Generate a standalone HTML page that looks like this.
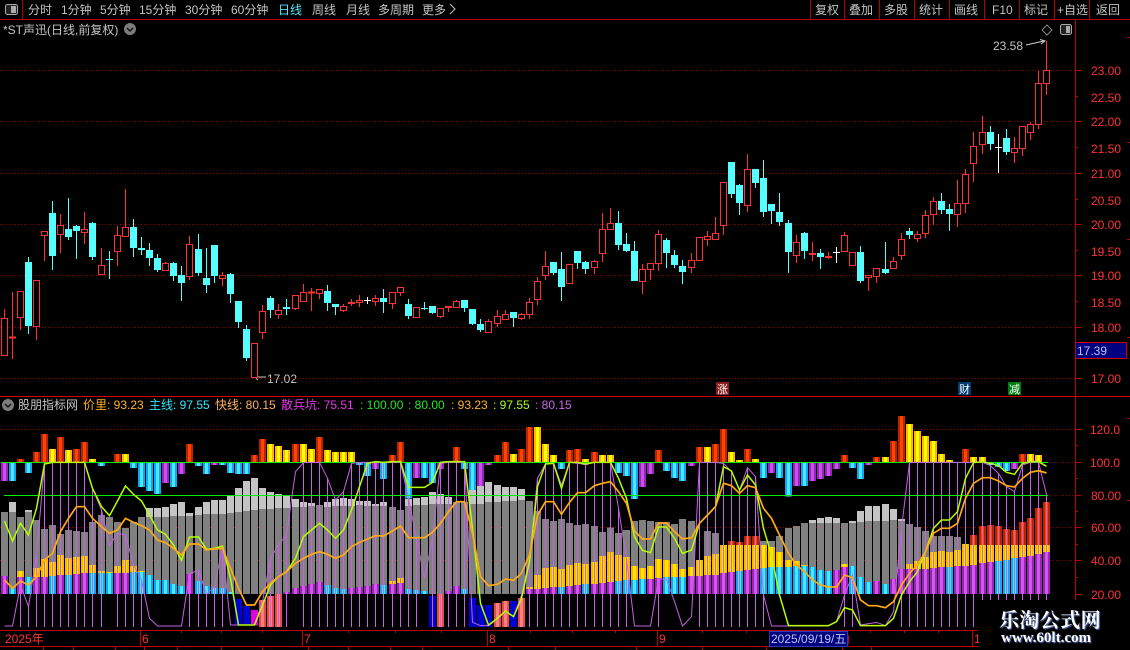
<!DOCTYPE html>
<html lang="zh-CN"><head><meta charset="utf-8"><title>*ST声迅</title>
<style>
html,body{margin:0;padding:0;background:#000;width:1130px;height:650px;overflow:hidden}
svg{position:absolute;left:0;top:0;display:block}
text{font-family:"Liberation Sans","Noto Sans CJK SC",sans-serif;font-size:12px;white-space:pre}
.m{fill:#c4c4c4}.r{fill:#ff3232}
.wm{position:absolute;left:979px;top:600px;width:151px;height:50px;background:#000}
.wm1{position:absolute;left:20px;top:7px;font:bold 20px/24px "Noto Serif CJK SC","Liberation Serif",serif;color:#fff;letter-spacing:.4px;white-space:nowrap;text-shadow:1px 1px 1px #5a78c8}
.wm2{position:absolute;left:22px;top:29px;font:bold 15px/18px "Liberation Serif",serif;color:#fff;white-space:nowrap;text-shadow:1px 1px 1px #5a78c8}
</style></head><body>
<svg width="1130" height="650" viewBox="0 0 1130 650" xmlns="http://www.w3.org/2000/svg" shape-rendering="crispEdges">
<rect width="1130" height="650" fill="#000"/>
<!-- top bar -->
<path d="M0 19.5H1130M22.5 0V19M810.5 0V19M844.5 0V19M879.5 0V19M914.5 0V19M949.5 0V19M984.5 0V19M1019.5 0V19M1054.5 0V19M1089.5 0V19" stroke="#b40000" fill="none"/>
<rect x="5.5" y="4.5" width="12" height="10" rx="2" fill="#222" stroke="#aaa" shape-rendering="auto"/><rect x="11" y="6" width="5" height="7" fill="#aaa"/>
<g class="m">
<text x="28" y="14">分时</text><text x="61" y="14">1分钟</text><text x="100" y="14">5分钟</text><text x="139" y="14">15分钟</text><text x="185" y="14">30分钟</text><text x="231" y="14">60分钟</text>
<text x="278" y="14" style="fill:#4fe8ff">日线</text><text x="312" y="14">周线</text><text x="346" y="14">月线</text><text x="378" y="14">多周期</text><text x="422" y="14">更多</text>
<text x="815" y="14">复权</text><text x="849" y="14">叠加</text><text x="884" y="14">多股</text><text x="919" y="14">统计</text><text x="954" y="14">画线</text><text x="992" y="14">F10</text><text x="1024" y="14">标记</text><text x="1057" y="14">+自选</text><text x="1096" y="14">返回</text>
<text x="3" y="34">*ST声迅(日线,前复权)</text>
<text x="993" y="50">23.58</text><text x="267" y="383">17.02</text>
</g>
<path d="M450 4l5 5-5 5" stroke="#c4c4c4" fill="none" shape-rendering="auto"/>
<circle cx="130" cy="29" r="6" fill="#7c7c7c" shape-rendering="auto"/><path d="M127 28l3 3 3-3" stroke="#111" stroke-width="1.4" fill="none" shape-rendering="auto"/>
<path d="M1047 25l5 5-5 5-5-5z" stroke="#888" fill="none" shape-rendering="auto"/>
<rect x="1060.5" y="24.5" width="11" height="10" rx="2" fill="#222" stroke="#aaa" shape-rendering="auto"/><rect x="1066" y="26" width="4" height="7" fill="#aaa"/>
<path d="M1026 45l18-4M1040 39.5l5 1.5-4 3" stroke="#ccc" fill="none" shape-rendering="auto"/>
<path d="M266 377H254M258 374l-4 3 4 3" stroke="#ccc" fill="none" shape-rendering="auto"/>
<!-- upper grid -->
<path d="M0 70.5H1075M0 121.5H1075M0 173.5H1075M0 224.5H1075M0 275.5H1075M0 327.5H1075M0 378.5H1075" stroke="#8c0000" stroke-dasharray="1 2" fill="none"/>
<!-- axes -->
<path d="M1075.5 19V600" stroke="#c00000" stroke-width="1" fill="none"/>
<path d="M0 396.5H1130" stroke="#d00000" fill="none"/>
<path d="M1076 70.5h5M1076 96.5h2M1076 121.5h5M1076 147.5h2M1076 173.5h5M1076 199.5h2M1076 224.5h5M1076 250.5h2M1076 275.5h5M1076 301.5h2M1076 327.5h5M1076 378.5h5M1076 429.5h5M1076 445.5h2M1076 462.5h5M1076 478.5h2M1076 495.5h5M1076 511.5h2M1076 527.5h5M1076 544.5h2M1076 560.5h5M1076 577.5h2M1076 594.5h5M1127 37.5h3M1127 142.5h3M1127 239.5h3M1127 337.5h3M1127 418.5h3M1127 500.5h3" stroke="#c00000" fill="none"/>
<g class="r">
<text x="1091" y="75">23.00</text><text x="1091" y="102">22.50</text><text x="1091" y="126">22.00</text><text x="1091" y="153">21.50</text><text x="1091" y="178">21.00</text><text x="1091" y="205">20.50</text><text x="1091" y="229">20.00</text><text x="1091" y="256">19.50</text><text x="1091" y="280">19.00</text><text x="1091" y="307">18.50</text><text x="1091" y="332">18.00</text><text x="1091" y="383">17.00</text>
<text x="1090" y="434">120.0</text><text x="1090" y="467">100.0</text><text x="1091" y="500">80.00</text><text x="1091" y="532">60.00</text><text x="1091" y="565">40.00</text><text x="1091" y="599">20.00</text>
</g>
<rect x="1075.5" y="342.5" width="51" height="16" fill="#000080" stroke="#d00000"/>
<text x="1077" y="355" style="fill:#b8c4f0">17.39</text>
<!-- markers -->
<rect x="716" y="382" width="13" height="13" fill="#8a1c1c"/><text x="717" y="393" style="font-size:11px;fill:#fff">涨</text>
<rect x="958" y="382" width="13" height="13" fill="#003a70"/><text x="959" y="393" style="font-size:11px;fill:#fff">财</text>
<rect x="1008" y="382" width="13" height="13" fill="#007c10"/><text x="1009" y="393" style="font-size:11px;fill:#fff">减</text>
<!-- candles cyan wicks -->
<path stroke="#55ffff" fill="none" d="M28.5 257V334M52.5 201V270M68.5 198V240M76.5 225V259M92.5 222V260M109.5 251V279M133.5 219V257M141.5 237V255M149.5 243V266M157.5 254V272M173.5 262V281M181.5 266V301M198.5 234V276M206.5 248V293M214.5 245V283M230.5 273V303M238.5 301V328M246.5 325V361M270.5 296V318M286.5 299V315M327.5 285V311M335.5 304V315M383.5 289V313M408.5 299V319M424.5 302V310M432.5 306V314M464.5 300V312M472.5 309V325M480.5 319V332M513.5 312V327M553.5 262V275M561.5 252V301M577.5 251V269M585.5 261V274M618.5 211V250M626.5 233V252M634.5 241V281M666.5 238V268M674.5 250V268M682.5 260V284M731.5 162V198M739.5 184V215M755.5 169V188M763.5 160V217M771.5 204V224M779.5 193V226M788.5 220V273M804.5 232V259M820.5 249V269M860.5 246V283M885.5 242V274M909.5 228V239M941.5 193V214M949.5 204V231M990.5 126V150M1006.5 129V155"/>
<path stroke="#55ffff" stroke-width="7" fill="none" d="M28.5 262V326M52.5 213V256M68.5 229V237M76.5 226V231M92.5 223V257M109.5 259V260M133.5 227V248M141.5 248V250M149.5 250V258M157.5 258V270M173.5 263V276M181.5 275V283M198.5 249V273M206.5 278V285M214.5 245V276M230.5 274V294M238.5 301V322M246.5 329V358M270.5 298V310M286.5 307V309M327.5 291V303M335.5 304V307M383.5 298V302M408.5 304V316M424.5 308V309M432.5 306V313M464.5 300V308M472.5 309V324M480.5 324V330M513.5 312V318M553.5 262V273M561.5 269V287M577.5 251V263M585.5 262V269M618.5 223V245M626.5 244V251M634.5 251V281M666.5 240V253M674.5 255V265M682.5 266V272M731.5 162V194M739.5 185V203M755.5 169V183M763.5 178V212M771.5 204V211M779.5 212V222M788.5 223V252M804.5 233V251M820.5 253V257M860.5 252V281M885.5 269V273M909.5 231V235M941.5 201V210M949.5 209V214M990.5 132V144M1006.5 138V152"/>
<!-- red wicks -->
<path stroke="#ff3232" fill="none" d="M4.5 309V356M12.5 292V359M20.5 292V330M36.5 281V340M44.5 232V261M60.5 214V253M84.5 212V244M101.5 248V275M117.5 226V266M125.5 189V237M165.5 262V271M189.5 236V280M222.5 272V286M254.5 344V378M262.5 305V339M278.5 304V319M295.5 295V310M303.5 284V302M311.5 288V311M319.5 290V299M343.5 304V312M351.5 299V306M359.5 295V307M375.5 295V306M392.5 293V309M400.5 288V296M416.5 308V318M440.5 309V318M448.5 306V312M456.5 300V308M488.5 319V333M497.5 310V327M505.5 310V320M521.5 313V320M529.5 298V319M537.5 277V305M545.5 251V280M569.5 265V284M594.5 260V274M602.5 213V262M610.5 208V230M642.5 264V294M650.5 264V280M658.5 230V271M691.5 253V273M699.5 238V261M707.5 231V246M715.5 217V240M723.5 183V235M747.5 154V212M796.5 235V263M812.5 242V261M828.5 252V259M844.5 232V252M852.5 252V266M868.5 276V291M876.5 268V283M893.5 257V269M901.5 233V260M917.5 231V242M925.5 210V238M933.5 197V225M957.5 180V227M965.5 169V213M973.5 132V182M982.5 116V154M1014.5 137V163M1022.5 126V156M1030.5 122V140M1038.5 71V129M1046.5 41V95"/>
<path stroke="#ff3232" fill="#000" d="M1.5 318.5h6V355.5h-6zM17.5 291.5h6V317.5h-6zM33.5 280.5h6V326.5h-6zM41.5 231.5h6V235.5h-6zM57.5 225.5h6V234.5h-6zM81.5 229.5h6V232.5h-6zM98.5 265.5h6V274.5h-6zM114.5 235.5h6V251.5h-6zM122.5 227.5h6V236.5h-6zM162.5 263.5h6V270.5h-6zM186.5 244.5h6V276.5h-6zM219.5 275.5h6V278.5h-6zM251.5 343.5h6V377.5h-6zM259.5 311.5h6V332.5h-6zM275.5 310.5h6V314.5h-6zM292.5 295.5h6V308.5h-6zM300.5 292.5h6V301.5h-6zM316.5 289.5h6V293.5h-6zM340.5 306.5h6V310.5h-6zM356.5 300.5h6V302.5h-6zM372.5 298.5h6V301.5h-6zM389.5 292.5h6V303.5h-6zM397.5 287.5h6V292.5h-6zM413.5 307.5h6V317.5h-6zM437.5 308.5h6V316.5h-6zM453.5 301.5h6V307.5h-6zM485.5 321.5h6V332.5h-6zM494.5 316.5h6V323.5h-6zM502.5 314.5h6V319.5h-6zM518.5 314.5h6V318.5h-6zM526.5 302.5h6V314.5h-6zM534.5 281.5h6V299.5h-6zM542.5 266.5h6V275.5h-6zM566.5 264.5h6V283.5h-6zM591.5 261.5h6V267.5h-6zM599.5 229.5h6V253.5h-6zM607.5 223.5h6V229.5h-6zM639.5 269.5h6V281.5h-6zM647.5 263.5h6V269.5h-6zM655.5 234.5h6V263.5h-6zM688.5 260.5h6V267.5h-6zM696.5 237.5h6V260.5h-6zM704.5 236.5h6V239.5h-6zM712.5 233.5h6V239.5h-6zM720.5 182.5h6V225.5h-6zM744.5 169.5h6V205.5h-6zM793.5 242.5h6V255.5h-6zM841.5 235.5h6V251.5h-6zM849.5 252.5h6V265.5h-6zM865.5 275.5h6V277.5h-6zM873.5 268.5h6V276.5h-6zM890.5 261.5h6V268.5h-6zM898.5 239.5h6V255.5h-6zM914.5 234.5h6V238.5h-6zM922.5 215.5h6V233.5h-6zM930.5 201.5h6V214.5h-6zM954.5 203.5h6V214.5h-6zM962.5 174.5h6V203.5h-6zM970.5 146.5h6V163.5h-6zM979.5 132.5h6V144.5h-6zM1011.5 148.5h6V152.5h-6zM1019.5 126.5h6V148.5h-6zM1027.5 124.5h6V132.5h-6zM1035.5 83.5h6V124.5h-6zM1043.5 70.5h6V83.5h-6z"/>
<path stroke="#ff3232" fill="none" stroke-width="2" d="M9 337.5h7M308 292.5h7M348 303h7M445 307h7M809 254h7M825 257h7"/>
<path stroke="#fff" fill="none" d="M367.5 297V304M836.5 247V263M998.5 134V173M364 300.5h7M833 252.5h7M995 147.5h7"/>
<!-- lower header -->
<circle cx="8" cy="405" r="6" fill="#7c7c7c" shape-rendering="auto"/><path d="M5 404l3 3 3-3" stroke="#111" stroke-width="1.4" fill="none" shape-rendering="auto"/>
<text x="18" y="409" style="fill:#c4c4c4">股朋指标网</text>
<text x="83" y="409" style="fill:#ffb028">价里: 93.23</text>
<text x="149" y="409" style="fill:#30e8ff">主线: 97.55</text>
<text x="215" y="409" style="fill:#ffb060">快线: 80.15</text>
<text x="281" y="409" style="fill:#e838e8">散兵坑: 75.51</text>
<text x="360" y="409" style="fill:#22e822">: 100.00</text>
<text x="408" y="409" style="fill:#22e822">: 80.00</text>
<text x="451" y="409" style="fill:#ffb028">: 93.23</text>
<text x="493" y="409" style="fill:#a8ff20">: 97.55</text>
<text x="535" y="409" style="fill:#c868e8">: 80.15</text>
<!-- lower grid -->
<path d="M0 429.5H1075M1048 462.5H1075M1048 495.5H1075M0 527.5H1075M0 560.5H1075" stroke="#8c0000" stroke-dasharray="1 2" fill="none"/>
<!-- lower bars: x in px, y in 3x-coordinates -->
<defs>
<path id="upr" d="M20.5 202V192M36.5 202V171M44.5 202V117M60.5 202V126M76.5 202V162M84.5 202V141M117.5 202V177M189.5 202V147M254.5 202V180M262.5 202V132M295.5 202V147M319.5 202V126M392.5 202V180M400.5 202V141M456.5 202V156M497.5 202V180M505.5 202V141M521.5 202V162M529.5 202V96M569.5 202V165M577.5 202V162M594.5 202V171M658.5 202V165M699.5 202V156M715.5 202V147M723.5 202V102M747.5 202V162M844.5 202V180M876.5 202V186M893.5 202V138M901.5 202V63M965.5 202V162M1022.5 202V177"/>
<path id="upy" d="M52.5 202V162M68.5 202V165M92.5 202V192M125.5 202V177M270.5 202V147M278.5 202V153M286.5 202V165M303.5 202V147M311.5 202V162M327.5 202V165M335.5 202V171M343.5 202V171M351.5 202V171M513.5 202V177M537.5 202V96M545.5 202V147M553.5 202V180M585.5 202V192M602.5 202V180M610.5 202V180M707.5 202V156M731.5 202V171M739.5 202V195M755.5 202V192M885.5 202V186M909.5 202V87M917.5 202V108M925.5 202V123M933.5 202V138M941.5 202V177M949.5 202V195M973.5 202V186M982.5 202V186M1030.5 202V177M1038.5 202V180"/>
<path id="dnp" d="M4.5 202V258M165.5 202V264M181.5 202V237M214.5 202V210M375.5 202V222M416.5 202V249M440.5 202V222M488.5 202V210M480.5 202V273M585.5 202V210M642.5 202V276M650.5 202V237M691.5 202V213M771.5 202V234M796.5 202V273M812.5 202V258M820.5 202V252M828.5 202V243M836.5 202V222M868.5 202V210M1014.5 202V222"/>
<path id="dnc" d="M12.5 202V258M28.5 202V234M101.5 202V213M133.5 202V219M141.5 202V276M149.5 202V288M157.5 202V297M173.5 202V276M198.5 202V213M206.5 202V237M222.5 202V210M230.5 202V234M238.5 202V237M246.5 202V237M359.5 202V210M367.5 202V243M383.5 202V252M408.5 202V310M424.5 202V249M432.5 202V264M464.5 202V222M472.5 202V285M561.5 202V222M618.5 202V234M626.5 202V243M634.5 202V312M666.5 202V228M674.5 202V249M682.5 202V258M763.5 202V249M779.5 202V249M788.5 202V304M804.5 202V273M852.5 202V219M860.5 202V252M990.5 202V210M998.5 202V216M1006.5 202V228"/>
<path id="rd" d="M731.5 597V438M739.5 597V441M747.5 597V423M755.5 597V423M973.5 597V420M982.5 597V393M990.5 597V390M998.5 597V393M1006.5 597V402M1014.5 597V405M1022.5 597V381M1030.5 597V369M1038.5 597V339M1046.5 597V321"/>
<path id="gd" d="M20.5 597V528M36.5 597V519M44.5 597V492M52.5 597V501M60.5 597V480M68.5 597V489M76.5 597V486M84.5 597V483M92.5 597V510M101.5 597V528M109.5 597V531M117.5 597V513M125.5 597V495M133.5 597V513M141.5 597V528M392.5 597V558M400.5 597V549M529.5 597V576M537.5 597V540M545.5 597V519M553.5 597V516M561.5 597V522M569.5 597V510M577.5 597V504M585.5 597V507M594.5 597V501M602.5 597V483M610.5 597V471M618.5 597V480M626.5 597V486M634.5 597V513M642.5 597V519M650.5 597V513M658.5 597V492M666.5 597V495M674.5 597V507M682.5 597V522M691.5 597V516M699.5 597V495M707.5 597V483M715.5 597V477M723.5 597V450M731.5 597V450M739.5 597V450M747.5 597V450M755.5 597V450M763.5 597V450M771.5 597V456M779.5 597V471M788.5 597V495M796.5 597V498M804.5 597V510M844.5 597V507M909.5 597V507M917.5 597V498M925.5 597V486M933.5 597V471M941.5 597V468M949.5 597V471M957.5 597V465M965.5 597V447M973.5 597V450M982.5 597V450M990.5 597V450M998.5 597V450M1006.5 597V450M1014.5 597V450M1022.5 597V450M1030.5 597V450M1038.5 597V450M1046.5 597V450"/>
<path id="pp" d="M4.5 597V543M20.5 597V546M36.5 597V546M44.5 597V546M60.5 597V540M76.5 597V537M84.5 597V534M117.5 597V534M125.5 597V534M189.5 597V537M286.5 597V591M295.5 597V579M303.5 597V573M311.5 597V567M319.5 597V561M351.5 597V579M359.5 597V576M367.5 597V573M375.5 597V567M392.5 597V567M400.5 597V564M448.5 597V588M456.5 597V573M529.5 597V582M537.5 597V582M545.5 597V579M553.5 597V576M569.5 597V573M577.5 597V570M594.5 597V567M602.5 597V564M610.5 597V561M650.5 597V552M658.5 597V549M691.5 597V543M699.5 597V543M707.5 597V540M715.5 597V540M723.5 597V534M731.5 597V531M747.5 597V525M755.5 597V522M836.5 597V525M844.5 597V516M876.5 597V558M893.5 597V552M901.5 597V522M909.5 597V522M917.5 597V522M925.5 597V522M933.5 597V519M941.5 597V516M957.5 597V513M965.5 597V513M973.5 597V510M982.5 597V504M990.5 597V501M1022.5 597V486M1030.5 597V483M1038.5 597V477M1046.5 597V471"/>
<path id="cc" d="M12.5 597V580M28.5 597V546M52.5 597V543M68.5 597V540M92.5 597V534M101.5 597V534M109.5 597V534M133.5 597V531M141.5 597V531M149.5 597V540M157.5 597V555M165.5 597V555M173.5 597V567M181.5 597V573M198.5 597V558M206.5 597V573M214.5 597V579M222.5 597V579M230.5 597V591M327.5 597V570M335.5 597V579M343.5 597V582M383.5 597V570M408.5 597V582M416.5 597V585M424.5 597V588M464.5 597V582M561.5 597V576M585.5 597V567M618.5 597V558M626.5 597V555M634.5 597V555M642.5 597V552M666.5 597V546M674.5 597V546M682.5 597V546M739.5 597V528M763.5 597V519M771.5 597V516M779.5 597V516M788.5 597V516M796.5 597V513M804.5 597V513M812.5 597V516M820.5 597V525M828.5 597V528M852.5 597V513M860.5 597V546M868.5 597V561M885.5 597V567M949.5 597V516M998.5 597V498M1006.5 597V495M1014.5 597V489"/>
<path id="bl" d="M238.5 612V691M246.5 633V691M432.5 603V696M472.5 609V696M480.5 630V696M488.5 630V696M513.5 618V696"/>
<path id="pk" d="M262.5 615V696M270.5 603V696M278.5 597V696M440.5 597V696M497.5 624V696M505.5 618V696M521.5 609V696"/>
</defs>
<g transform="translate(0 395) scale(1 .33333)" fill="none">
<!-- gray -->
<path stroke="#808080" stroke-width="7" d="M4.5 597V351M12.5 597V351M20.5 597V366M28.5 597V351M36.5 597V375M44.5 597V402M52.5 597V390M60.5 597V417M68.5 597V405M76.5 597V408M84.5 597V411M92.5 597V381M101.5 597V360M109.5 597V366M117.5 597V381M125.5 597V399M133.5 597V381M141.5 597V366M149.5 597V366M157.5 597V366M165.5 597V366M173.5 597V363M181.5 597V363M189.5 597V363M198.5 597V360M206.5 597V357M214.5 597V357M222.5 597V357M230.5 597V354M238.5 597V351M246.5 597V348M254.5 597V345M262.5 597V342M270.5 597V342M278.5 597V339M286.5 597V339M295.5 597V336M303.5 597V336M311.5 597V333M319.5 597V330M327.5 597V336M335.5 597V333M343.5 597V333M351.5 597V333M359.5 597V330M367.5 597V333M375.5 597V333M383.5 597V333M392.5 597V336M400.5 597V345M408.5 597V333M416.5 597V330M424.5 597V330M432.5 597V327M440.5 597V327M448.5 597V327M456.5 597V321M464.5 597V321M472.5 597V327M480.5 597V327M488.5 597V321M497.5 597V321M505.5 597V318M513.5 597V318M521.5 597V315M529.5 597V318M537.5 597V348M545.5 597V372M553.5 597V378M561.5 597V372M569.5 597V384M577.5 597V390M585.5 597V387M594.5 597V393M602.5 597V411M610.5 597V397M618.5 597V414M626.5 597V405M634.5 597V378M642.5 597V375M650.5 597V378M658.5 597V381M666.5 597V381M674.5 597V387M682.5 597V372M691.5 597V378M707.5 597V408M715.5 597V414M763.5 597V438M771.5 597V438M779.5 597V423M788.5 597V399M796.5 597V393M804.5 597V384M812.5 597V384M820.5 597V384M828.5 597V384M836.5 597V384M844.5 597V384M852.5 597V384M860.5 597V381M868.5 597V378M876.5 597V378M885.5 597V378M893.5 597V375M901.5 597V378M909.5 597V387M917.5 597V396M925.5 597V408M933.5 597V423M941.5 597V423M949.5 597V423M957.5 597V426"/>
<path stroke="#c4c4c4" stroke-width="7" d="M12.5 351V321M28.5 351V345M149.5 366V339M157.5 366V339M165.5 366V336M173.5 363V327M181.5 363V321M189.5 363V354M198.5 360V336M206.5 357V321M214.5 357V315M222.5 357V315M230.5 354V303M238.5 351V279M246.5 348V258M254.5 345V249M262.5 342V279M270.5 342V291M278.5 339V297M286.5 339V303M295.5 336V312M303.5 336V321M311.5 333V324M327.5 336V321M335.5 333V312M343.5 333V309M351.5 333V312M359.5 330V318M367.5 333V318M375.5 333V327M383.5 333V321M408.5 333V312M416.5 330V309M424.5 330V306M432.5 327V291M440.5 327V297M448.5 327V306M472.5 327V282M480.5 327V264M488.5 321V261M497.5 321V270M505.5 318V276M513.5 318V276M521.5 315V282M812.5 384V375M820.5 384V369M828.5 384V366M836.5 384V369M852.5 384V378M860.5 381V348M868.5 378V333M876.5 378V333M885.5 378V327M893.5 375V342M901.5 378V372"/>
<!-- stacks -->
<use href="#rd" stroke="#b82400" stroke-width="7"/><use href="#rd" stroke="#ff4400" stroke-width="3"/>
<use href="#gd" stroke="#ffb400" stroke-width="7"/><use href="#gd" stroke="#ffe600" stroke-width="3"/>
<use href="#pp" stroke="#9a24b8" stroke-width="7"/><use href="#pp" stroke="#d850f0" stroke-width="3"/>
<use href="#cc" stroke="#14a4f4" stroke-width="7"/><use href="#cc" stroke="#48e8ff" stroke-width="3"/>
<!-- negatives -->
<use href="#bl" stroke="#0000d0" stroke-width="7"/>
<path stroke="#e000e0" stroke-width="7" d="M254.5 645V691"/>
<use href="#pk" stroke="#e84a4a" stroke-width="7"/><use href="#pk" stroke="#ff8080" stroke-width="3"/>
<!-- up/down bars -->
<use href="#upr" stroke="#b82400" stroke-width="7"/><use href="#upr" stroke="#ff4400" stroke-width="3"/>
<use href="#upy" stroke="#ffb400" stroke-width="7"/><use href="#upy" stroke="#ffff00" stroke-width="3"/>
<use href="#dnp" stroke="#9a24b8" stroke-width="7"/><use href="#dnp" stroke="#c850f0" stroke-width="3"/>
<use href="#dnc" stroke="#14a4f4" stroke-width="7"/><use href="#dnc" stroke="#48e8ff" stroke-width="3"/>
<!-- sticks -->
<path stroke="#c860e8" d="M20.5 696V570M28.5 696V635M36.5 696V480M44.5 696V205M52.5 696V202M60.5 696V202M68.5 696V202M76.5 696V202M84.5 696V202M92.5 696V280M101.5 696V345M117.5 696V415M125.5 696V420M133.5 696V510M141.5 696V555M189.5 696V536M198.5 696V526M206.5 696V598M214.5 696V575M222.5 696V455M270.5 696V490M278.5 696V450M286.5 696V420M303.5 696V203M311.5 696V202M319.5 696V202M327.5 696V250M335.5 696V315M343.5 696V290M351.5 696V205M359.5 696V202M367.5 696V202M375.5 696V202M383.5 696V202M392.5 696V202M400.5 696V202M408.5 696V310M416.5 696V430M432.5 696V430M440.5 696V205M448.5 696V202M456.5 696V202M464.5 696V202M529.5 696V490M537.5 696V250M545.5 696V207M553.5 696V205M561.5 696V270M569.5 696V202M577.5 696V205M585.5 696V208M594.5 696V202M602.5 696V202M610.5 696V202M618.5 696V340M626.5 696V490M658.5 696V552M699.5 696V202M707.5 696V202M715.5 696V202M723.5 696V205M731.5 696V230M739.5 696V285M747.5 696V218M755.5 696V245M763.5 696V600M844.5 696V600M852.5 696V540M901.5 696V400M909.5 696V203M917.5 696V202M925.5 696V202M933.5 696V202M941.5 696V202M949.5 696V202M957.5 696V202M965.5 696V202M973.5 696V202M982.5 696V202M990.5 696V212M998.5 696V235M1006.5 696V275M1014.5 696V290M1022.5 696V210M1030.5 696V202M1038.5 696V202M1046.5 696V298"/>
<!-- horizontals -->
<path stroke="#00f000" d="M1 202.5H1048M4 301.5H1048" shape-rendering="crispEdges" vector-effect="non-scaling-stroke"/>
<!-- curves -->
<polyline vector-effect="non-scaling-stroke" shape-rendering="auto" stroke="#c860e8" stroke-width="1" points="4.5,693 12.5,693 20.5,570 28.5,635 36.5,480 44.5,205 52.5,202 84.5,202 92.5,280 101.5,345 109.5,452 117.5,415 125.5,420 133.5,510 141.5,555 149.5,670 157.5,693 181.5,693 189.5,536 198.5,526 206.5,598 214.5,575 222.5,455 230.5,690 254.5,690 262.5,620 270.5,490 278.5,450 286.5,420 295.5,230 303.5,203 319.5,202 327.5,250 335.5,315 343.5,290 351.5,205 359.5,202 375.5,202 383.5,202 400.5,202 408.5,310 416.5,430 424.5,550 432.5,430 440.5,205 448.5,202 464.5,202 472.5,682 480.5,692 488.5,692 497.5,672 505.5,650 513.5,665 521.5,600 529.5,490 537.5,250 545.5,207 553.5,205 561.5,270 569.5,202 577.5,205 585.5,208 594.5,202 610.5,202 618.5,340 626.5,490 634.5,693 650.5,693 658.5,552 666.5,552 674.5,620 682.5,693 691.5,665 699.5,202 715.5,202 723.5,205 731.5,230 739.5,285 747.5,218 755.5,245 763.5,600 771.5,693 828.5,693 836.5,680 844.5,600 852.5,540 860.5,690 876.5,682 885.5,692 893.5,650 901.5,400 909.5,203 917.5,202 982.5,202 990.5,212 998.5,235 1006.5,275 1014.5,290 1022.5,210 1030.5,202 1038.5,202 1046.5,298"/>
<polyline vector-effect="non-scaling-stroke" shape-rendering="auto" stroke="#b4ff00" stroke-width="1.5" points="4.5,378 12.5,438 20.5,385 28.5,420 36.5,340 44.5,207 52.5,202 84.5,202 92.5,280 101.5,335 109.5,362 117.5,318 125.5,273 133.5,298 141.5,318 149.5,360 157.5,405 165.5,418 173.5,450 181.5,496 189.5,426 198.5,426 206.5,463 214.5,460 222.5,453 230.5,550 238.5,690 254.5,690 262.5,630 270.5,570 278.5,545 286.5,530 295.5,490 303.5,425 311.5,405 319.5,385 327.5,405 335.5,430 343.5,405 351.5,345 359.5,275 367.5,205 375.5,200 383.5,202 392.5,200 400.5,200 408.5,277 424.5,277 432.5,262 440.5,202 448.5,200 464.5,200 472.5,400 480.5,625 488.5,690 497.5,670 505.5,648 513.5,665 521.5,610 529.5,500 537.5,275 545.5,207 553.5,205 561.5,280 569.5,202 577.5,202 585.5,207 594.5,202 610.5,202 618.5,250 626.5,310 634.5,425 642.5,466 650.5,473 658.5,396 666.5,396 674.5,430 682.5,475 691.5,465 699.5,385 707.5,360 715.5,335 723.5,215 731.5,228 739.5,285 747.5,240 755.5,270 763.5,400 771.5,480 779.5,600 788.5,692 828.5,692 836.5,680 844.5,638 852.5,645 860.5,692 885.5,692 893.5,670 901.5,600 909.5,560 917.5,530 925.5,470 933.5,400 941.5,375 949.5,375 957.5,350 965.5,250 973.5,203 982.5,200 990.5,205 998.5,212 1006.5,232 1014.5,238 1022.5,205 1030.5,200 1038.5,200 1046.5,214"/>
<polyline vector-effect="non-scaling-stroke" shape-rendering="auto" stroke="#ffaa14" stroke-width="1.7" points="4.5,555 12.5,580 20.5,558 28.5,570 36.5,545 44.5,495 52.5,475 60.5,410 68.5,370 76.5,335 84.5,335 92.5,370 101.5,395 109.5,415 117.5,405 125.5,370 133.5,382 141.5,392 149.5,405 157.5,435 165.5,443 173.5,460 181.5,480 189.5,447 198.5,447 206.5,465 214.5,462 222.5,460 230.5,520 238.5,580 246.5,630 254.5,630 262.5,590 270.5,565 278.5,545 286.5,530 295.5,505 303.5,490 311.5,478 319.5,470 327.5,478 335.5,490 343.5,480 351.5,455 359.5,442 367.5,432 375.5,422 383.5,423 392.5,408 400.5,393 408.5,428 424.5,428 432.5,412 440.5,385 448.5,350 456.5,320 464.5,320 472.5,415 480.5,545 488.5,572 497.5,568 505.5,552 513.5,556 521.5,535 529.5,480 537.5,360 545.5,320 553.5,320 561.5,358 569.5,322 577.5,293 585.5,293 594.5,272 602.5,265 610.5,260 618.5,290 626.5,325 634.5,408 642.5,432 650.5,432 658.5,384 666.5,384 674.5,410 682.5,432 691.5,428 699.5,385 707.5,360 715.5,335 723.5,265 731.5,272 739.5,295 747.5,272 755.5,278 763.5,340 771.5,370 779.5,420 788.5,475 796.5,510 804.5,530 812.5,555 820.5,570 828.5,576 836.5,576 844.5,540 852.5,548 860.5,615 868.5,632 876.5,632 885.5,638 893.5,620 901.5,570 909.5,535 917.5,510 925.5,470 933.5,415 941.5,400 949.5,400 957.5,385 965.5,310 973.5,265 982.5,248 990.5,248 998.5,258 1006.5,272 1014.5,276 1022.5,250 1030.5,232 1038.5,227 1046.5,234"/>
</g>
<!-- bottom date row -->
<path d="M0 630.5H978M0 646.5H978M140.5 631V646M302.5 631V646M487.5 631V646M657.5 631V646M848.5 635V644M972.5 631V646M181.5 631v2M221.5 631v2M262.5 631v2M348.5 631v2M395.5 631v2M441.5 631v2M530.5 631v2M572.5 631v2M615.5 631v2M702.5 631v2M746.5 631v2M870.5 631v2M904.5 631v2M938.5 631v2M43.5 647v3M73.5 647v3M115.5 647v3M144.5 647v3M177.5 647v3M221.5 647v3M262.5 647v3M308.5 647v3M348.5 647v3M390.5 647v3M422.5 647v3M508.5 647v3M555.5 647v3M636.5 647v3M702.5 647v3M766.5 647v3M842.5 647v3M871.5 647v3" stroke="#c00000" fill="none"/>
<g class="r"><text x="5" y="643">2025年</text><text x="142" y="643">6</text><text x="304" y="643">7</text><text x="489" y="643">8</text><text x="659" y="643">9</text><text x="974" y="643">1</text></g>
<rect x="769.5" y="631.5" width="78" height="15" fill="#000080" stroke="#2a3ab0"/>
<text x="771" y="643" style="fill:#b8c4f0">2025/09/19/五</text>
</svg>
<div class="wm"><div class="wm1">乐淘公式网</div><div class="wm2">www.60lt.com</div></div>
</body></html>
